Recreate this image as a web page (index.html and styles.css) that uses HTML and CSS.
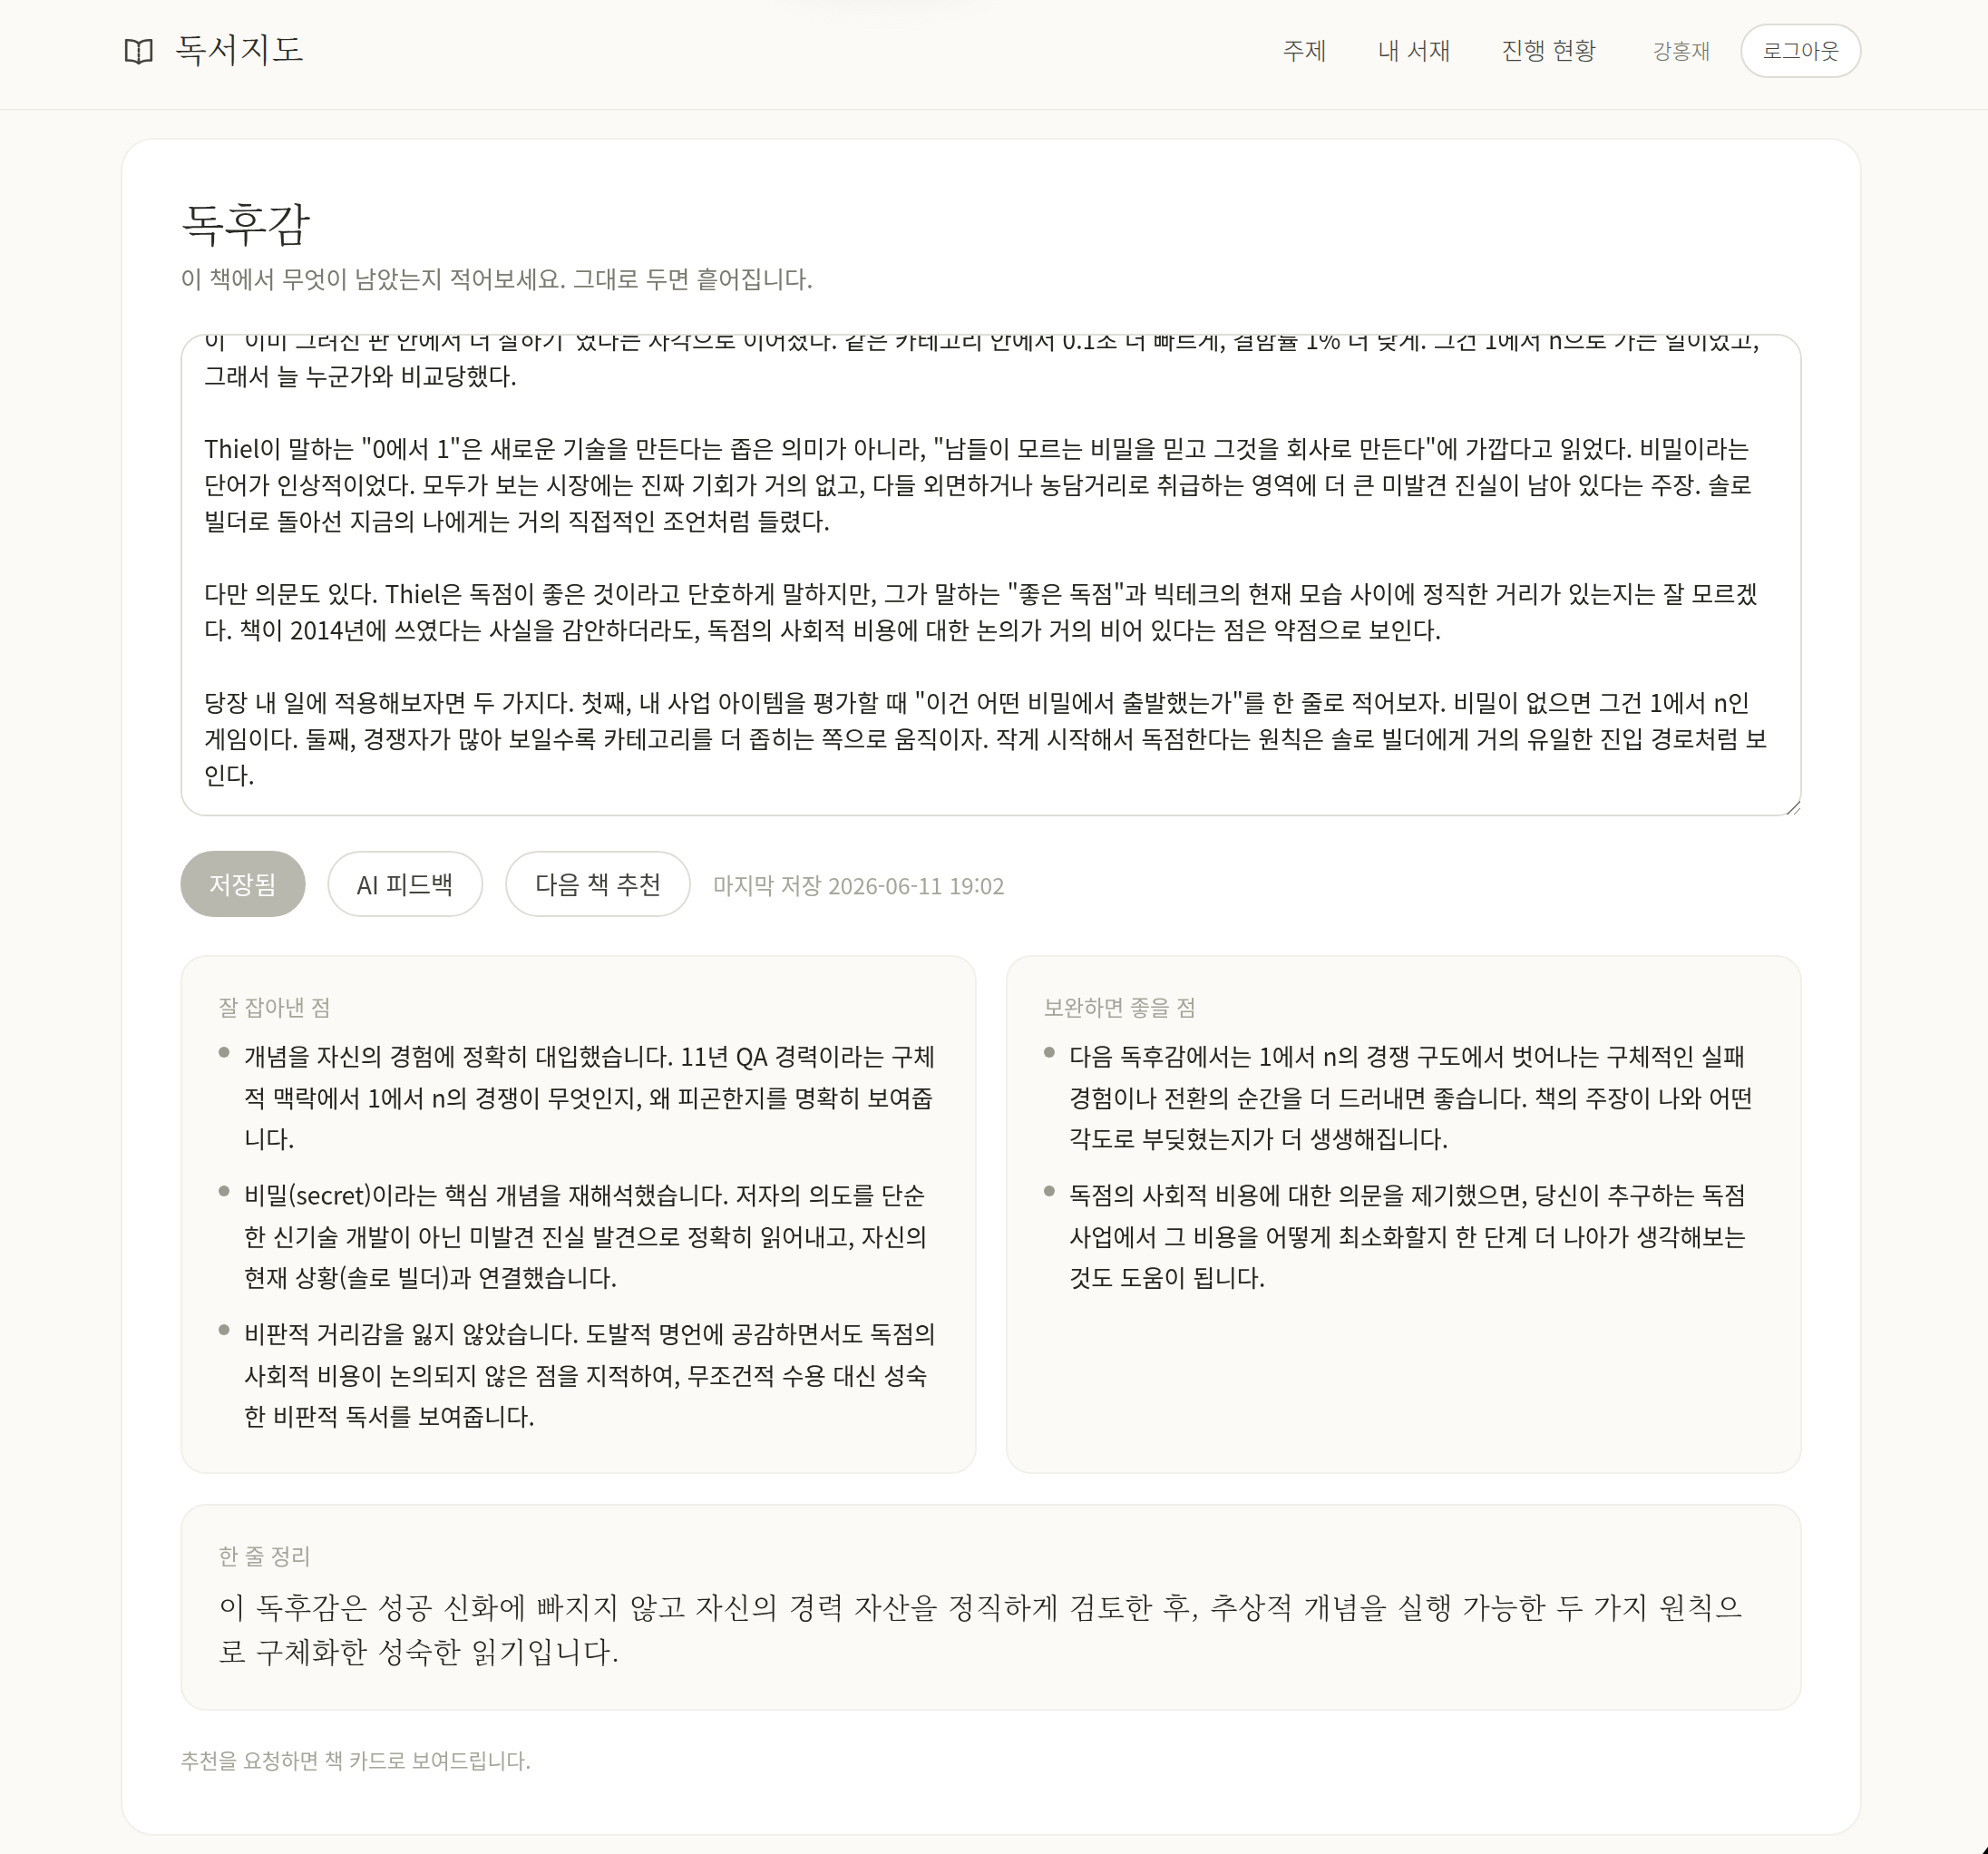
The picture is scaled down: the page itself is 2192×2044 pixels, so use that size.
FILE: index.html
```html
<!DOCTYPE html>
<html lang="ko">
<head>
<meta charset="utf-8">
<title>독서지도 - 독후감</title>
<link rel="stylesheet" href="styles.css">
</head>
<body>
<header class="topbar">
  <a class="brand" href="#">
    <svg class="brand-icon" viewBox="0 0 32 28" fill="none" stroke="currentColor" stroke-width="2.5" stroke-linejoin="round" stroke-linecap="round" aria-hidden="true">
      <path d="M16 5.5C13.5 3 9.5 1.8 3 2V23C9.5 22.8 13.5 23.8 16 26.2C18.5 23.8 22.5 22.8 29 23V2C22.5 1.8 18.5 3 16 5.5Z"/>
      <path d="M16 6V25.5" stroke-dasharray="2.6 2.6"/>
    </svg>
    <span class="brand-name">독서지도</span>
  </a>
  <nav class="nav">
    <a class="nav-link" href="#">주제</a>
    <a class="nav-link" href="#">내 서재</a>
    <a class="nav-link" href="#">진행 현황</a>
    <span class="nav-user">강홍재</span>
    <button class="logout" type="button">로그아웃</button>
  </nav>
</header>

<main class="page">
  <section class="card">
    <h1 class="title">독후감</h1>
    <p class="subtitle">이 책에서 무엇이 남았는지 적어보세요. 그대로 두면 흩어집니다.</p>

    <textarea class="editor" id="editor" spellcheck="false">11년 동안 QA로 일하면서 나는 남이 만든 제품의 결함을 찾는 일에 익숙해졌다. 이 책의 첫 질문을 읽으며 그 시간이 어떤 경쟁이었는지 다시 생각하게 되었다.

내가 해온 일은 대부분 기존 제품을 조금씩 다듬는 일이었고, 그 경험
이 "이미 그려진 판 안에서 더 잘하기"였다는 자각으로 이어졌다. 같은 카테고리 안에서 0.1초 더 빠르게, 결함률 1% 더 낮게. 그건 1에서 n으로 가는 일이었고, 그래서 늘 누군가와 비교당했다.

Thiel이 말하는 "0에서 1"은 새로운 기술을 만든다는 좁은 의미가 아니라, "남들이 모르는 비밀을 믿고 그것을 회사로 만든다"에 가깝다고 읽었다. 비밀이라는 단어가 인상적이었다. 모두가 보는 시장에는 진짜 기회가 거의 없고, 다들 외면하거나 농담거리로 취급하는 영역에 더 큰 미발견 진실이 남아 있다는 주장. 솔로 빌더로 돌아선 지금의 나에게는 거의 직접적인 조언처럼 들렸다.

다만 의문도 있다. Thiel은 독점이 좋은 것이라고 단호하게 말하지만, 그가 말하는 "좋은 독점"과 빅테크의 현재 모습 사이에 정직한 거리가 있는지는 잘 모르겠다. 책이 2014년에 쓰였다는 사실을 감안하더라도, 독점의 사회적 비용에 대한 논의가 거의 비어 있다는 점은 약점으로 보인다.

당장 내 일에 적용해보자면 두 가지다. 첫째, 내 사업 아이템을 평가할 때 "이건 어떤 비밀에서 출발했는가"를 한 줄로 적어보자. 비밀이 없으면 그건 1에서 n인 게임이다. 둘째, 경쟁자가 많아 보일수록 카테고리를 더 좁히는 쪽으로 움직이자. 작게 시작해서 독점한다는 원칙은 솔로 빌더에게 거의 유일한 진입 경로처럼 보인다.</textarea>

    <div class="actions">
      <button class="btn btn-saved" type="button">저장됨</button>
      <button class="btn" type="button">AI 피드백</button>
      <button class="btn" type="button">다음 책 추천</button>
      <span class="saved-at">마지막 저장 2026-06-11 19:02</span>
    </div>

    <div class="feedback">
      <article class="panel">
        <h2 class="panel-label">잘 잡아낸 점</h2>
        <ul class="points">
          <li>개념을 자신의 경험에 정확히 대입했습니다. 11년 QA 경력이라는 구체적 맥락에서 1에서 n의 경쟁이 무엇인지, 왜 피곤한지를 명확히 보여줍니다.</li>
          <li>비밀(secret)이라는 핵심 개념을 재해석했습니다. 저자의 의도를 단순한 신기술 개발이 아닌 미발견 진실 발견으로 정확히 읽어내고, 자신의 현재 상황(솔로 빌더)과 연결했습니다.</li>
          <li>비판적 거리감을 잃지 않았습니다. 도발적 명언에 공감하면서도 독점의 사회적 비용이 논의되지 않은 점을 지적하여, 무조건적 수용 대신 성숙한 비판적 독서를 보여줍니다.</li>
        </ul>
      </article>
      <article class="panel">
        <h2 class="panel-label">보완하면 좋을 점</h2>
        <ul class="points">
          <li>다음 독후감에서는 1에서 n의 경쟁 구도에서 벗어나는 구체적인 실패 경험이나 전환의 순간을 더 드러내면 좋습니다. 책의 주장이 나와 어떤 각도로 부딪혔는지가 더 생생해집니다.</li>
          <li>독점의 사회적 비용에 대한 의문을 제기했으면, 당신이 추구하는 독점 사업에서 그 비용을 어떻게 최소화할지 한 단계 더 나아가 생각해보는 것도 도움이 됩니다.</li>
        </ul>
      </article>
    </div>

    <article class="panel panel-summary">
      <h2 class="panel-label">한 줄 정리</h2>
      <p class="summary">이 독후감은 성공 신화에 빠지지 않고 자신의 경력 자산을 정직하게 검토한 후, 추상적 개념을 실행 가능한 두 가지 원칙으로 구체화한 성숙한 읽기입니다.</p>
    </article>

    <p class="footnote">추천을 요청하면 책 카드로 보여드립니다.</p>
  </section>
</main>
<span class="window-corner" aria-hidden="true"></span>
<script src="app.js"></script>
</body>
</html>
```

FILE: styles.css
```css
* { box-sizing: border-box; }
html, body { margin: 0; padding: 0; }
body {
  position: relative;
  height: 2044px;
  overflow: hidden;
  background: #fbfaf6;
  color: #2b2b26;
  font-family: "Noto Sans CJK KR", "Noto Sans", sans-serif;
}
.topbar {
  position: relative;
  height: 122px;
  padding: 0 139px 8px 136px;
  display: flex;
  align-items: center;
  justify-content: space-between;
  border-bottom: 2px solid #f1f0eb;
}
.topbar::before {
  content: "";
  position: absolute;
  top: -28px;
  left: 860px;
  width: 230px;
  height: 36px;
  border-radius: 50%;
  background: #efeee9;
  filter: blur(12px);
  opacity: .5;
}
.brand {
  display: flex;
  align-items: center;
  gap: 23px;
  color: #44443e;
  text-decoration: none;
  position: relative;
}
.brand-icon { width: 34px; height: 30px; margin-top: 1px; }
.brand-name {
  font-family: "Noto Serif CJK KR", "Noto Sans CJK KR", serif;
  font-size: 36px;
  font-weight: 300;
  letter-spacing: .8px;
  color: #2b2b26;
  margin-top: -5px;
}
.nav { display: flex; align-items: center; position: relative; }
.nav-link {
  color: #44443e;
  font-size: 26.5px;
  font-weight: 300;
  text-decoration: none;
  margin: -3px 56px 0 0;
}
.nav-link:nth-child(3) { margin-right: 62px; }
.nav-user {
  color: #6f6f66;
  font-size: 23px;
  font-weight: 300;
  margin: -2px 33px 0 0;
}
.logout {
  width: 134px;
  height: 60px;
  border: 2px solid #dedDD6;
  border-radius: 30px;
  background: #fff;
  color: #44443e;
  font: 300 23px "Noto Sans CJK KR", sans-serif;
  padding: 0 0 2px;
}
.page { padding: 30px 139px 0 133px; }
.card {
  height: 1872px;
  padding: 0 64px;
  background: #fff;
  border: 2px solid #f1f0eb;
  border-radius: 36px;
}
.title {
  margin: 0;
  padding: 57px 0 0 1px;
  font-family: "Noto Serif CJK KR", "Noto Sans CJK KR", serif;
  font-size: 49px;
  font-weight: 300;
  line-height: 68px;
  color: #2b2b26;
}
.subtitle {
  margin: 8px 0 0;
  font-size: 26.4px;
  font-weight: 400;
  line-height: 40px;
  color: #7a7a70;
}
.editor {
  display: block;
  width: 100%;
  height: 532px;
  margin-top: 41px;
  padding: 24px 28px 24px 24px;
  border: 2px solid #dedDD6;
  border-radius: 28px;
  background: #fff;
  color: #26261f;
  font: 400 26.4px/40px "Noto Sans CJK KR", sans-serif;
  resize: vertical;
  outline: none;
}
.editor::-webkit-scrollbar { width: 0; height: 0; }
.editor::-webkit-resizer {
  background: linear-gradient(135deg, transparent 0 48%, #77776f 48% 54%, transparent 54% 74%, #77776f 74% 80%, transparent 80%);
}
.actions {
  display: flex;
  align-items: center;
  margin-top: 38px;
  gap: 24px;
}
.btn {
  height: 73px;
  padding: 0 31px;
  border: 2px solid #dedDD6;
  border-radius: 37px;
  background: #fff;
  color: #44443e;
  font: 400 27px "Noto Sans CJK KR", sans-serif;
}
.btn-saved { background: #b8b8ae; border-color: #b8b8ae; color: #fff; padding: 0 29.5px; }
.saved-at { font-size: 24.6px; font-weight: 400; color: #a5a59b; }
.feedback {
  display: grid;
  grid-template-columns: 1fr 1fr;
  gap: 32px;
  margin-top: 42px;
}
.panel {
  padding: 39px 38px 39px 40px;
  background: #fbfaf6;
  border: 2px solid #f1f0eb;
  border-radius: 28px;
}
.panel-label {
  margin: 0;
  font-size: 24px;
  font-weight: 400;
  line-height: 32px;
  color: #a5a59b;
}
.points { list-style: none; margin: 15px 0 0; padding: 0; }
.points li {
  position: relative;
  padding-left: 28px;
  font-size: 26.4px;
  font-weight: 400;
  line-height: 45.5px;
  color: #26261f;
}
.points li + li { margin-top: 16.5px; }
.points li::before {
  content: "";
  position: absolute;
  left: 0;
  top: 13px;
  width: 12px;
  height: 12px;
  border-radius: 50%;
  background: #9a9a8e;
}
.panel-summary { margin-top: 33px; height: 228px; }
.summary {
  margin: 15px 0 0;
  font-family: "Noto Serif CJK KR", "Noto Sans CJK KR", serif;
  font-size: 31px;
  font-weight: 300;
  line-height: 49px;
  letter-spacing: .9px;
  color: #26261f;
}
.footnote {
  margin: 39px 0 0;
  font-size: 22.7px;
  font-weight: 400;
  line-height: 32px;
  color: #a5a59b;
}
.window-corner {
  position: absolute;
  right: 0;
  bottom: 0;
  width: 6px;
  height: 8px;
  background: #000;
  clip-path: polygon(100% 0, 100% 100%, 0 100%);
}
```

FILE: app.js
```js
var editor = document.getElementById("editor");
editor.scrollTop = editor.scrollHeight;
```
